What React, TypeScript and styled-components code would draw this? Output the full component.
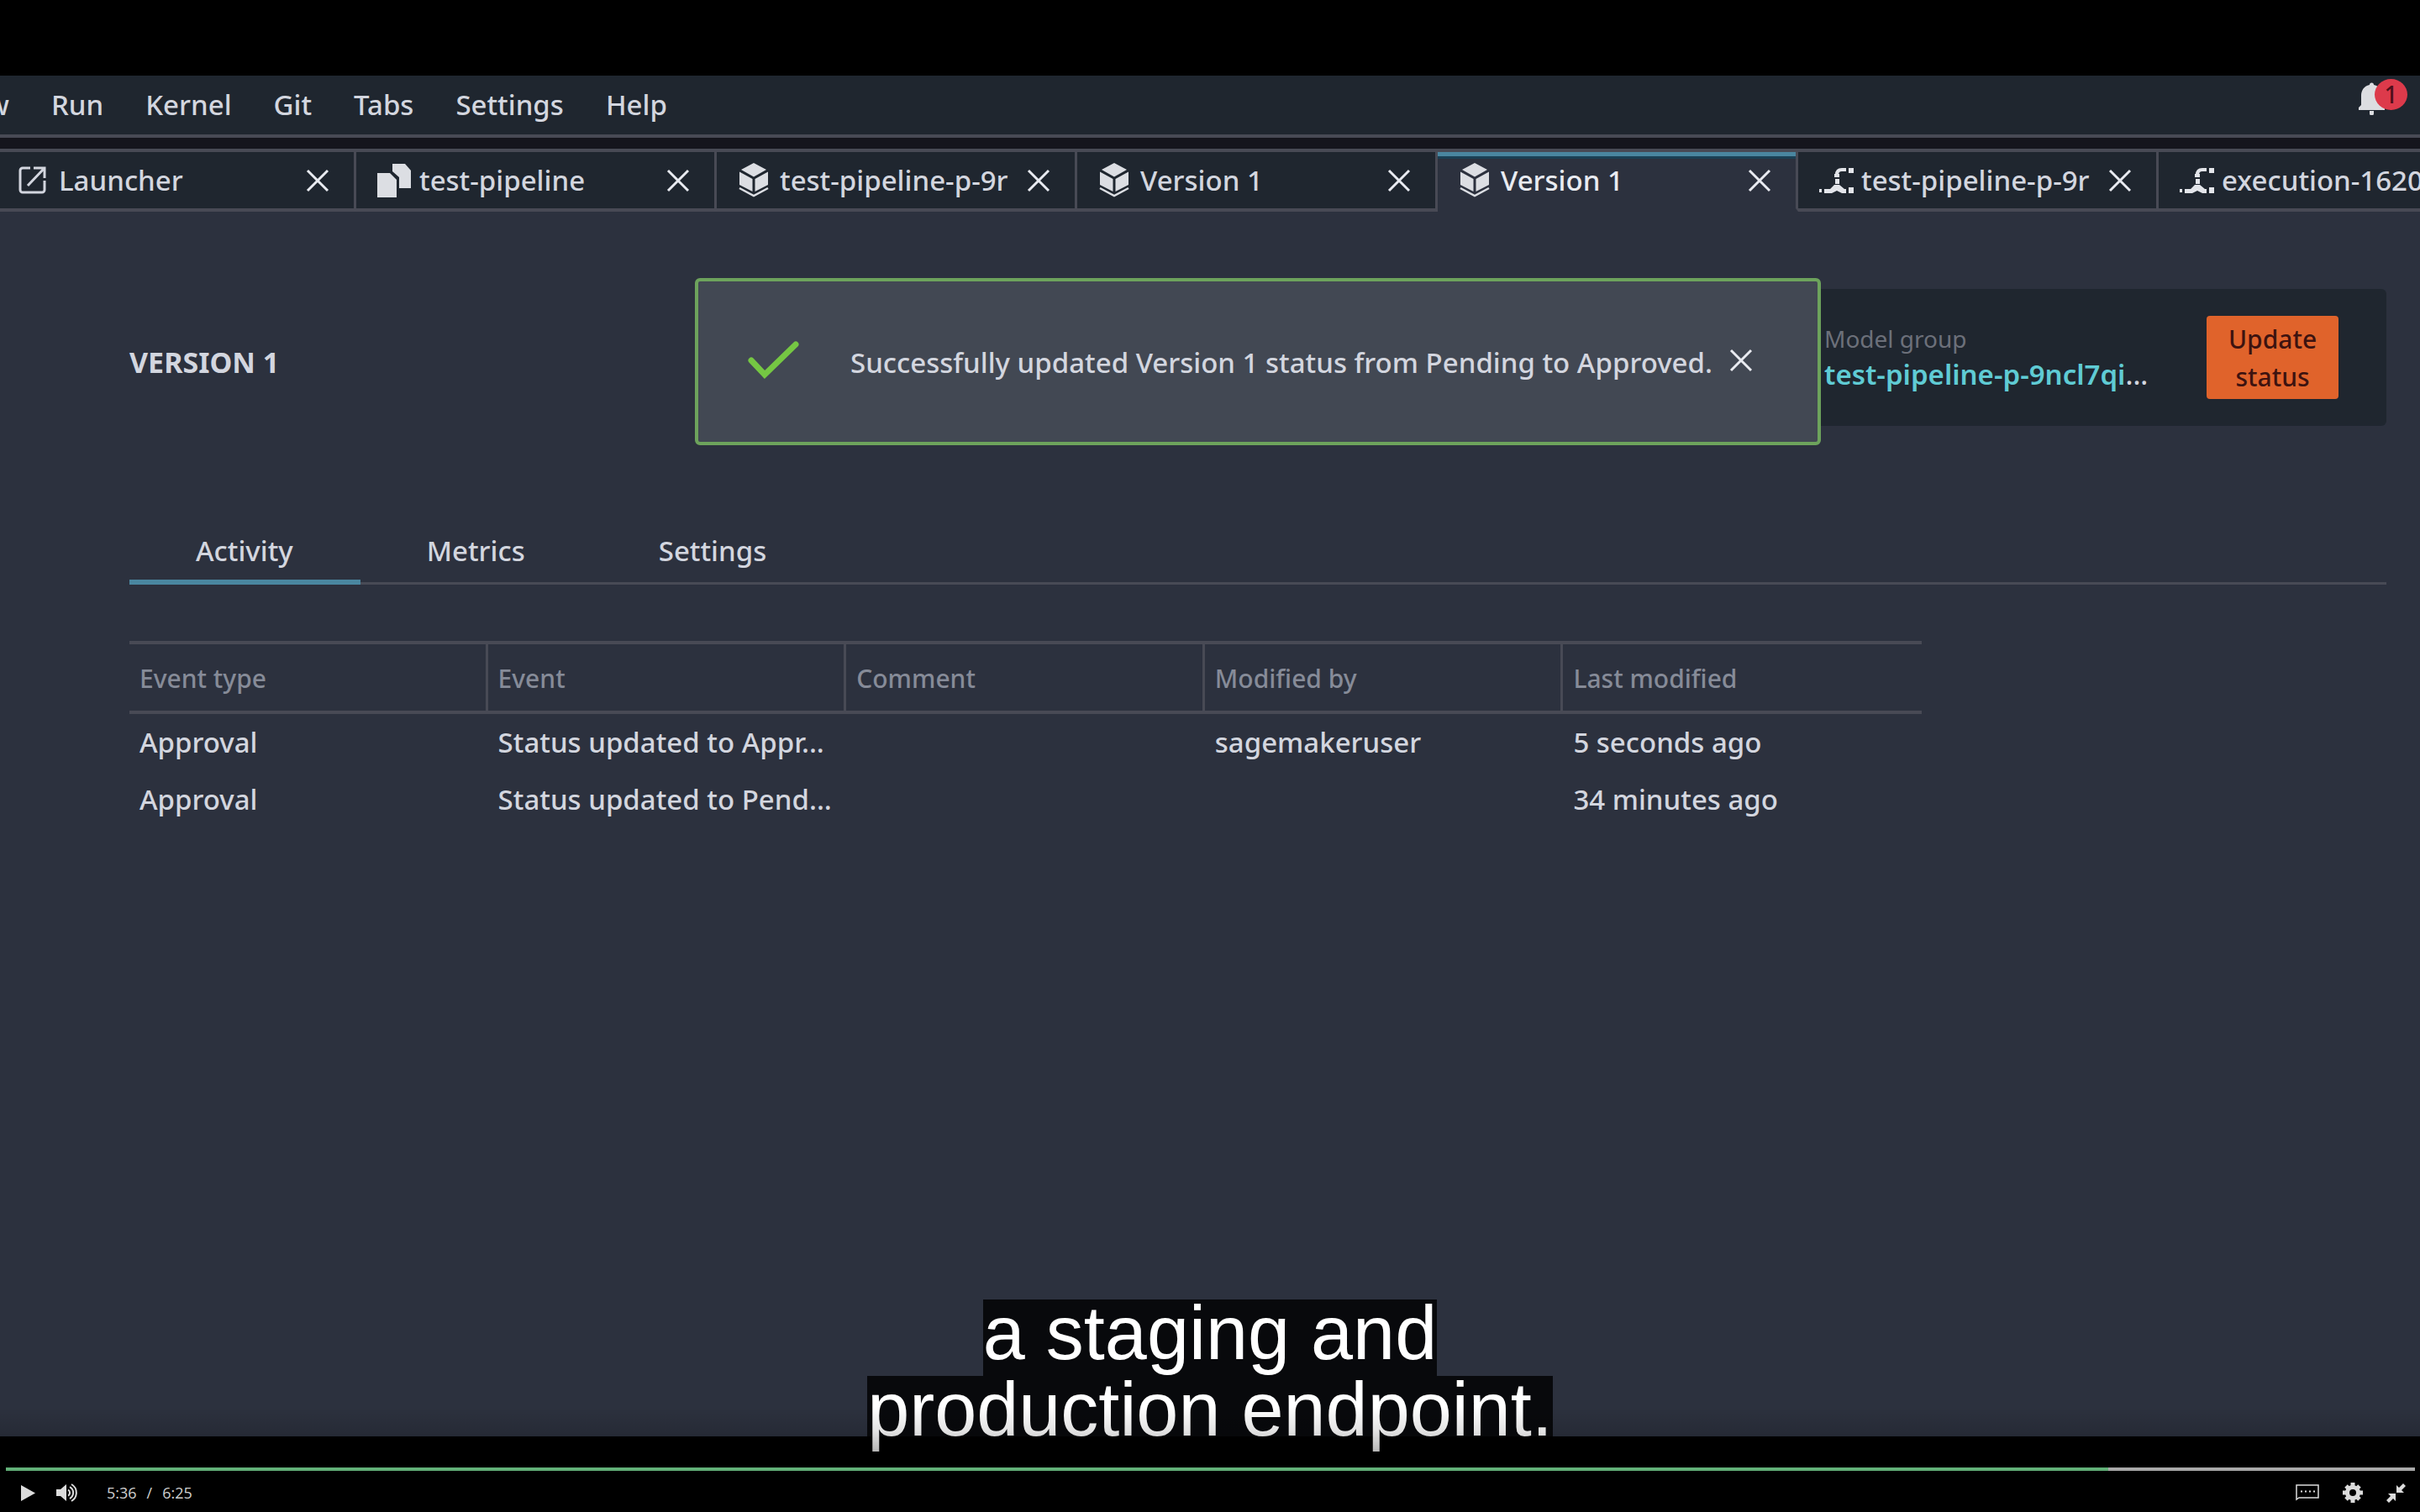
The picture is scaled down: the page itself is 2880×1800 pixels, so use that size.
import React, { useState } from 'react';
import styled, { createGlobalStyle, css } from 'styled-components';

const color = {
  bar: '#1f262f',
  page: '#2c313e',
  panel: '#1f262f',
  gap: '#15151d',
  line: '#484a55',
  text: '#d3d6df',
  bright: '#e9ebf1',
  muted: '#868b98',
  accent: '#4a86a0',
  link: '#5fcbd4',
  toast: '#424853',
  success: '#6da35c',
  action: '#e0632b',
  alert: '#dd3a4b',
};

const GlobalStyle = createGlobalStyle`
  *, *::before, *::after { box-sizing: border-box; }
  body {
    margin: 0;
    background: #000;
    color: ${color.text};
    font: 500 33px/44px "Noto Sans", "Open Sans", sans-serif;
  }
  button {
    padding: 0;
    border: 0;
    background: none;
    color: inherit;
    font: inherit;
    cursor: pointer;
  }
`;

const Player = styled.div`
  position: relative;
  display: flex;
  flex-direction: column;
  height: 100vh;
  padding-top: 90px;
  overflow: hidden;
`;

const Studio = styled.div`
  display: flex;
  flex: 1;
  flex-direction: column;
  min-height: 0;
  overflow: hidden;
  background: ${color.page};
`;

const MenuBar = styled.nav`
  display: flex;
  flex: none;
  align-items: center;
  gap: 50px;
  height: 74px;
  border-bottom: 4px solid ${color.line};
  background: ${color.bar};
`;

const MenuButton = styled.button<{ $cut?: boolean }>`
  ${(p) =>
    p.$cut &&
    css`
      display: flex;
      justify-content: flex-end;
      width: 11px;
      overflow: hidden;
    `}
`;

const Notifications = styled.button`
  position: relative;
  width: 29px;
  height: 40px;
  margin: 0 44px 16px auto;
  color: #dcdde1;
`;

const Count = styled.span`
  position: absolute;
  top: -3px;
  left: 19px;
  width: 39px;
  height: 37px;
  border-radius: 50%;
  background: ${color.alert};
  color: #4f0f1b;
  font-size: 28px;
  line-height: 36px;
  text-align: center;
`;

const DockTabs = styled.div`
  display: flex;
  flex: none;
  height: 88px;
  margin-left: -5px;
  border-top: 13px solid ${color.gap};
`;

const DockTab = styled.div<{ $active?: boolean }>`
  display: flex;
  flex: 0 0 429px;
  align-items: center;
  min-width: 0;
  border: solid ${color.line};
  border-width: 4px 3px 4px 0;
  padding: 0 29px 0 25px;
  background: ${color.bar};

  ${(p) =>
    p.$active &&
    css`
      border-bottom-color: ${color.page};
      background: ${color.page};
      box-shadow: inset 0 5px ${color.accent}, inset 0 8px #1b4054;
      color: ${color.bright};
    `}
`;

const DockLabel = styled.button`
  display: flex;
  flex: 1;
  align-items: center;
  min-width: 0;
  overflow: hidden;
  white-space: nowrap;

  svg {
    flex: none;
    margin-right: 8px;
  }
`;

const CloseButton = styled.button`
  display: flex;
  flex: none;
  margin-left: 16px;
  color: ${color.bright};
`;

const Content = styled.main`
  padding: 92px 40px 0 154px;
`;

const Header = styled.header`
  position: relative;
  display: flex;
  align-items: center;
  justify-content: space-between;
`;

const Title = styled.h1`
  margin: 0;
  padding-top: 11px;
  font-size: 34px;
  font-weight: 700;
  line-height: 44px;
`;

const Summary = styled.section`
  display: flex;
  align-items: center;
  gap: 62px;
  height: 163px;
  border-radius: 6px;
  padding: 0 57px 0 120px;
  background: ${color.panel};
`;

const Field = styled.div`
  width: 393px;
  padding-bottom: 2px;
  white-space: nowrap;
`;

const FieldName = styled.div`
  color: #6c707a;
  font-size: 28px;
  font-weight: 400;
  line-height: 42px;
`;

const GroupLink = styled.a`
  color: ${color.link};
  font-weight: 600;
  text-decoration: none;
`;

const UpdateButton = styled.button`
  width: 157px;
  border-radius: 4px;
  padding: 5px 20px 4px;
  background: ${color.action};
  color: #3d1310;
  font-size: 30px;
  line-height: 45px;
`;

const Toast = styled.div`
  position: absolute;
  top: -13px;
  left: 50%;
  display: flex;
  align-items: center;
  width: 1340px;
  height: 199px;
  border: 4px solid ${color.success};
  border-radius: 6px;
  padding: 0 77px 4px 58px;
  transform: translateX(-50%);
  background: ${color.toast};
  white-space: nowrap;
`;

const ToastText = styled.p`
  flex: 1;
  margin: 0;
  padding: 6px 0 0 60px;
`;

const TabList = styled.div`
  display: flex;
  margin-top: 107px;
  border-bottom: 3px solid ${color.line};
`;

const Tab = styled.button<{ $active?: boolean }>`
  margin-bottom: -3px;
  border-bottom: 6px solid ${(p) => (p.$active ? color.accent : 'transparent')};
  padding: 8px 80px 0 79px;
  line-height: 68px;
`;

const Events = styled.table`
  width: 100%;
  max-width: 2133px;
  margin-top: 67px;
  border-collapse: separate;
  border-spacing: 0;
  table-layout: fixed;
  text-align: left;
`;

const HeadCell = styled.th`
  height: 87px;
  border: solid ${color.line};
  border-width: 4px 3px 4px 0;
  padding: 3px 12px 0;
  color: ${color.muted};
  font-size: 30px;
  font-weight: 500;

  &:last-child {
    border-right: 0;
  }
`;

const Cell = styled.td`
  height: 68px;
  padding: 0 0 0 12px;
  white-space: nowrap;
`;

const Caption = styled.div`
  position: absolute;
  right: 0;
  bottom: 71px;
  left: 0;
  display: flex;
  flex-direction: column;
  align-items: center;
  color: #fff;
  font: 400 90px/81px "Liberation Sans", Arial, sans-serif;
`;

const CaptionLine = styled.span`
  padding-bottom: 10px;
  background: rgba(0, 0, 0, 0.8);
`;

const Controls = styled.footer`
  position: relative;
  flex: none;
  height: 90px;
  padding: 37px 6px 0 7px;

  &::before {
    position: absolute;
    top: -35px;
    right: 0;
    left: 0;
    height: 125px;
    background: linear-gradient(transparent, rgba(0, 0, 0, 0.12) 30px, rgba(0, 0, 0, 0.28) 52px);
    content: '';
  }
`;

const Seek = styled.input`
  position: relative;
  display: block;
  width: 100%;
  height: 4px;
  margin: 0;
  appearance: none;

  &::-webkit-slider-thumb {
    width: 0;
    height: 0;
    appearance: none;
  }
`;

const ControlRow = styled.div`
  position: relative;
  display: flex;
  align-items: center;
  height: 52px;
  padding: 0 11px 0 18px;
  color: #dcdcdc;
`;

const ControlButton = styled.button<{ $gap?: number }>`
  display: flex;
  margin-left: ${(p) => p.$gap ?? 0}px;
`;

const Time = styled.div`
  display: flex;
  flex: 1;
  gap: 12px;
  margin-left: 33px;
  color: #cfcfcf;
  font: 400 18px/24px "Open Sans", "Noto Sans", sans-serif;
`;

const CloseIcon = () => (
  <svg width="28" height="28" viewBox="0 0 28 28" fill="none" stroke="currentColor" strokeWidth="3">
    <path d="M2 2l24 24M26 2L2 26" />
  </svg>
);

const LaunchIcon = () => (
  <svg width="42" height="42" viewBox="0 0 42 42" fill="none" stroke="#d3d6df" strokeWidth="3">
    <path d="M16 6H7a3 3 0 0 0-3 3v23a3 3 0 0 0 3 3h23a3 3 0 0 0 3-3V21" />
    <path d="M20 6h13v12M33 6L13 27" />
  </svg>
);

const FilesIcon = () => (
  <svg width="42" height="42" viewBox="0 0 42 42" fill="#dcdee3">
    <path d="M18 1h15l7 8v21H26V17l-8-7z" />
    <path d="M0 12h15l8 8v21H0z" />
  </svg>
);

const CubeIcon = () => (
  <svg width="42" height="42" viewBox="0 0 42 42" fill="#dcdee3">
    <path d="M19 0l15 8-15 8.500L4 8z" />
    <path d="M2 10.500l15.500 8.500v15L2 26zM36 10.500L20.500 19v15L36 26z" />
    <path d="M2 30l17 9 17-9" fill="none" stroke="#dcdee3" strokeWidth="2.500" />
  </svg>
);

const PipelineIcon = () => (
  <svg width="42" height="42" viewBox="0 0 42 42" fill="#e3e5ea">
    <path d="M0 31h3v4H0zM35 29h6v7h-6zM35 6h6v6h-6z" />
    <path d="M21 14c0-4 2-6 6-6h5" fill="none" stroke="#e3e5ea" strokeWidth="4" />
    <path d="M18 13h6v4h-6zM19 19h5v6h-5zM6 31h7l5-5h6l6 5h2v5h-5l-6-3-6 3H6z" />
  </svg>
);

const BellIcon = () => (
  <svg width="31" height="40" viewBox="0 0 31 40" fill="currentColor">
    <path d="M13 4a2.500 2.500 0 0 1 5 0c7 1.500 10 7 10 13v11l3 3v3H0v-3l3-3V17C3 11 6 5.500 13 4zM13 35h5v3a2.500 2.500 0 0 1-5 0z" />
  </svg>
);

const CheckIcon = () => (
  <svg width="63" height="46" viewBox="0 0 63 46" fill="none" stroke="#75c743" strokeWidth="7">
    <path d="M5 23l16 17L58 4" strokeLinecap="round" />
  </svg>
);

const PlayIcon = () => (
  <svg width="17" height="19" viewBox="0 0 17 19" fill="currentColor">
    <path d="M0 0l17 9.500L0 19z" />
  </svg>
);

const VolumeIcon = () => (
  <svg width="27" height="22" viewBox="0 0 27 22" fill="none" stroke="currentColor" strokeWidth="2">
    <path d="M0 7h5l7-6v20l-7-6H0z" fill="currentColor" stroke="none" />
    <path d="M14 7.500a4 4 0 0 1 0 7M16 4a8 8 0 0 1 0 14M18 1a11.500 11.500 0 0 1 0 20" />
  </svg>
);

const SubtitlesIcon = () => (
  <svg width="28" height="20" viewBox="0 0 28 20" fill="none" stroke="currentColor">
    <path d="M1 18V1h26v15H4z" strokeWidth="1.500" />
    <path d="M6 8.500h18" strokeWidth="2" strokeDasharray="2 3" />
  </svg>
);

const GearIcon = () => (
  <svg width="24" height="24" viewBox="0 0 24 24" fill="none" stroke="currentColor">
    <circle cx="12" cy="12" r="6.500" strokeWidth="5" />
    <path d="M12 0v4M12 20v4M0 12h4M20 12h4M4 4l2.500 2.500M17.500 17.500L20 20M20 4l-2.500 2.500M6.500 17.500L4 20" strokeWidth="5" />
  </svg>
);

const ShrinkIcon = () => (
  <svg width="23" height="23" viewBox="0 0 23 23" fill="currentColor">
    <path d="M12 2v9h9l-3-3 5-5-3-3-5 5zM11 21v-9H2l3 3-5 5 3 3 5-5z" />
  </svg>
);

const menus = ['Run', 'Kernel', 'Git', 'Tabs', 'Settings', 'Help'];

const openTabs = [
  { Icon: LaunchIcon, label: 'Launcher' },
  { Icon: FilesIcon, label: 'test-pipeline' },
  { Icon: CubeIcon, label: 'test-pipeline-p-9r' },
  { Icon: CubeIcon, label: 'Version 1' },
  { Icon: CubeIcon, label: 'Version 1', active: true },
  { Icon: PipelineIcon, label: 'test-pipeline-p-9r' },
  { Icon: PipelineIcon, label: 'execution-1620' },
];

const sections = ['Activity', 'Metrics', 'Settings'];
const columns = ['Event type', 'Event', 'Comment', 'Modified by', 'Last modified'];
const events = [
  ['Approval', 'Status updated to Appr...', '', 'sagemakeruser', '5 seconds ago'],
  ['Approval', 'Status updated to Pend...', '', '', '34 minutes ago'],
];

const duration = 385;
const clock = (s: number) => `${Math.floor(s / 60)}:${String(s % 60).padStart(2, '0')}`;

export default function App() {
  const [section, setSection] = useState('Activity');
  const [time, setTime] = useState(336);
  const [toastOpen, setToastOpen] = useState(true);
  const played = (time / duration) * 100;

  return (
    <Player>
      <GlobalStyle />
      <Studio>
        <MenuBar>
          <MenuButton $cut>View</MenuButton>
          {menus.map((name) => (
            <MenuButton key={name}>{name}</MenuButton>
          ))}
          <Notifications aria-label="Notifications">
            <BellIcon />
            <Count>1</Count>
          </Notifications>
        </MenuBar>

        <DockTabs>
          {openTabs.map(({ Icon, label, active }, i) => (
            <DockTab key={i} $active={active}>
              <DockLabel>
                <Icon />
                {label}
              </DockLabel>
              <CloseButton aria-label="Close tab">
                <CloseIcon />
              </CloseButton>
            </DockTab>
          ))}
        </DockTabs>

        <Content>
          <Header>
            <Title>VERSION 1</Title>
            <Summary>
              <Field>
                <FieldName>Model group</FieldName>
                <GroupLink href="#group">test-pipeline-p-9ncl7qi</GroupLink>...
              </Field>
              <UpdateButton>Update status</UpdateButton>
            </Summary>
            {toastOpen && (
              <Toast role="status">
                <CheckIcon />
                <ToastText>Successfully updated Version 1 status from Pending to Approved.</ToastText>
                <CloseButton aria-label="Dismiss" onClick={() => setToastOpen(false)}>
                  <CloseIcon />
                </CloseButton>
              </Toast>
            )}
          </Header>

          <TabList role="tablist">
            {sections.map((name) => (
              <Tab
                key={name}
                role="tab"
                aria-selected={name === section}
                $active={name === section}
                onClick={() => setSection(name)}
              >
                {name}
              </Tab>
            ))}
          </TabList>

          <Events>
            <thead>
              <tr>
                {columns.map((name) => (
                  <HeadCell key={name}>{name}</HeadCell>
                ))}
              </tr>
            </thead>
            <tbody>
              {events.map((row, r) => (
                <tr key={r}>
                  {row.map((value, c) => (
                    <Cell key={c}>{value}</Cell>
                  ))}
                </tr>
              ))}
            </tbody>
          </Events>
        </Content>
      </Studio>

      <Caption>
        <CaptionLine>a staging and</CaptionLine>
        <CaptionLine>production endpoint.</CaptionLine>
      </Caption>

      <Controls>
        <Seek
          type="range"
          aria-label="Seek"
          min={0}
          max={duration}
          value={time}
          onChange={(e) => setTime(Number(e.target.value))}
          style={{ background: `linear-gradient(90deg, #62b078 ${played}%, #a8a8a8 ${played}%)` }}
        />
        <ControlRow>
          <ControlButton aria-label="Play">
            <PlayIcon />
          </ControlButton>
          <ControlButton aria-label="Mute" $gap={25}>
            <VolumeIcon />
          </ControlButton>
          <Time>
            <span>{clock(time)}</span>
            <span>/</span>
            <span>{clock(duration)}</span>
          </Time>
          <ControlButton aria-label="Subtitles">
            <SubtitlesIcon />
          </ControlButton>
          <ControlButton aria-label="Settings" $gap={28}>
            <GearIcon />
          </ControlButton>
          <ControlButton aria-label="Exit full screen" $gap={28}>
            <ShrinkIcon />
          </ControlButton>
        </ControlRow>
      </Controls>
    </Player>
  );
}
